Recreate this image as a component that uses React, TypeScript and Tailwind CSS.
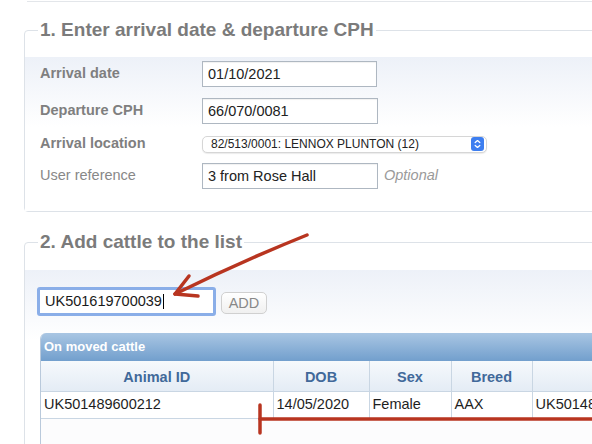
const labelCls = "w-[162px] shrink-0 text-[14.5px] font-bold text-[#7f7f7f]";
const inputCls =
  "w-[175px] h-[26px] border border-[#aeb7c1] bg-white px-[5px] text-[14.5px] text-[#222] outline-none shadow-[inset_0_1px_1px_rgba(0,0,0,0.06)]";

const headers = [
  { label: "Animal ID", w: "w-[232px]" },
  { label: "DOB", w: "w-[96px]" },
  { label: "Sex", w: "w-[82px]" },
  { label: "Breed", w: "w-[81px]" },
  { label: "", w: "w-[200px]" },
];

const row = ["UK501489600212", "14/05/2020", "Female", "AAX", "UK501489600212"];

function Stepper() {
  return (
    <svg width="13" height="14" viewBox="0 0 13 14">
      <rect x="0" y="0" width="13" height="14" rx="3" fill="#3d7ef0" />
      <path d="M4.2 5.6 L6.5 3.6 L8.8 5.6" fill="none" stroke="#fff" strokeWidth="1.3" strokeLinecap="round" strokeLinejoin="round" />
      <path d="M4.2 8.4 L6.5 10.4 L8.8 8.4" fill="none" stroke="#fff" strokeWidth="1.3" strokeLinecap="round" strokeLinejoin="round" />
    </svg>
  );
}

export default function App() {
  return (
    <div className="relative w-[592px] h-[444px] overflow-hidden bg-white font-['Liberation_Sans',Arial,sans-serif]">
      <div className="w-[760px]">
        <div className="ml-[27px] h-[2px] border-b border-[#e3e6ea]" />

        {/* step 1 */}
        <fieldset className="ml-[24px] mt-[17px] rounded-[4px] border border-[#dde2e8]">
          <legend className="ml-[13px] px-[2px] text-[19px] leading-[22px] font-bold text-[#7b7b7b]">
            1. Enter arrival date &amp; departure CPH
          </legend>
          <div className="mt-[16px] bg-linear-to-b from-[#edf1f8] to-white to-[70px] pl-[15px] pt-[4px] pb-[22px]">
            <div className="flex h-[26px] items-center">
              <span className={labelCls}>Arrival date</span>
              <input readOnly defaultValue="01/10/2021" className={inputCls} />
            </div>
            <div className="mt-[11px] flex h-[26px] items-center">
              <span className={labelCls}>Departure CPH</span>
              <input readOnly defaultValue="66/070/0081" className={inputCls + " w-[176px]"} />
            </div>
            <div className="mt-[7px] flex h-[26px] items-center">
              <span className={labelCls}>Arrival location</span>
              <div className="flex h-[17px] w-[285px] items-center justify-between rounded-[5px] border border-[#d6d6d6] bg-white pl-[8px] pr-[2px] text-[12px] text-[#222] shadow-[0_1px_1px_rgba(0,0,0,0.08)]">
                <span>82/513/0001: LENNOX PLUNTON (12)</span>
                <Stepper />
              </div>
            </div>
            <div className="mt-[6px] flex h-[26px] items-center">
              <span className="w-[162px] shrink-0 text-[14.5px] text-[#888]">User reference</span>
              <input readOnly defaultValue="3 from Rose Hall" className={inputCls + " w-[176px]"} />
              <span className="ml-[6px] text-[14.5px] italic text-[#9a9a9a]">Optional</span>
            </div>
          </div>
        </fieldset>

        {/* step 2 */}
        <fieldset className="ml-[24px] mt-[19px] rounded-[4px] border border-[#dde2e8]">
          <legend className="ml-[13px] px-[2px] text-[19px] leading-[22px] font-bold text-[#7b7b7b]">
            2. Add cattle to the list
          </legend>
          <div className="mt-[17px] bg-linear-to-b from-[#edf1f8] to-white to-[70px] pl-[12px] pt-[17px] pb-[30px]">
            <div className="flex items-center">
              <div className="flex h-[29px] w-[179px] items-center rounded-[3px] border-[3px] border-[#8aaee8] bg-white px-[5px] text-[14.5px] text-[#1a1a1a]">
                UK501619700039
                <span className="ml-[1px] inline-block h-[15px] w-[1px] bg-black" />
              </div>
              <button className="ml-[5px] mt-[3px] h-[22px] w-[46px] rounded-[5px] border border-[#d0d0d0] bg-linear-to-b from-white to-[#f0f0f0] text-[14.5px] text-[#888]">
                ADD
              </button>
            </div>

            <div className="ml-[3px] mt-[17px] overflow-hidden rounded-tl-[6px] border-l border-[#b9c9db]">
              <div className="flex h-[28px] items-center bg-linear-to-b from-[#a9c6e3] to-[#729fcd] pl-[3px] text-[13px] font-bold text-white">
                On moved cattle
              </div>
              <table className="border-collapse">
                <thead>
                  <tr className="h-[30px] bg-linear-to-b from-[#f6f9fc] to-[#e4ecf5]">
                    {headers.map((h, i) => (
                      <th
                        key={i}
                        className={`${h.w} border-r border-b border-[#c9d6e3] px-0 pt-[4px] pb-0 text-center text-[14.5px] font-bold text-[#41699a]`}
                      >
                        {h.label}
                      </th>
                    ))}
                  </tr>
                </thead>
                <tbody>
                  <tr className="h-[27px] bg-white">
                    {row.map((c, i) => (
                      <td key={i} className="border-r border-b border-[#c9d6e3] px-[3px] py-0 text-[14.5px] text-[#1e1e1e]">
                        {c}
                      </td>
                    ))}
                  </tr>
                </tbody>
              </table>
              <div className="h-[40px] bg-[#fcfcfd]" />
            </div>
          </div>
        </fieldset>
      </div>

      {/* red annotations */}
      <svg className="pointer-events-none absolute inset-0" width="592" height="444" viewBox="0 0 592 444">
        <g fill="none" stroke="#b83520" strokeWidth="3.5" strokeLinecap="round" strokeLinejoin="round">
          <path d="M307 235 Q 240 262 175 294" />
          <path d="M189 276 L175 294 L198 296" />
          <path d="M260 405 L260 433" />
          <path d="M260 419 L600 419" />
        </g>
      </svg>
    </div>
  );
}
